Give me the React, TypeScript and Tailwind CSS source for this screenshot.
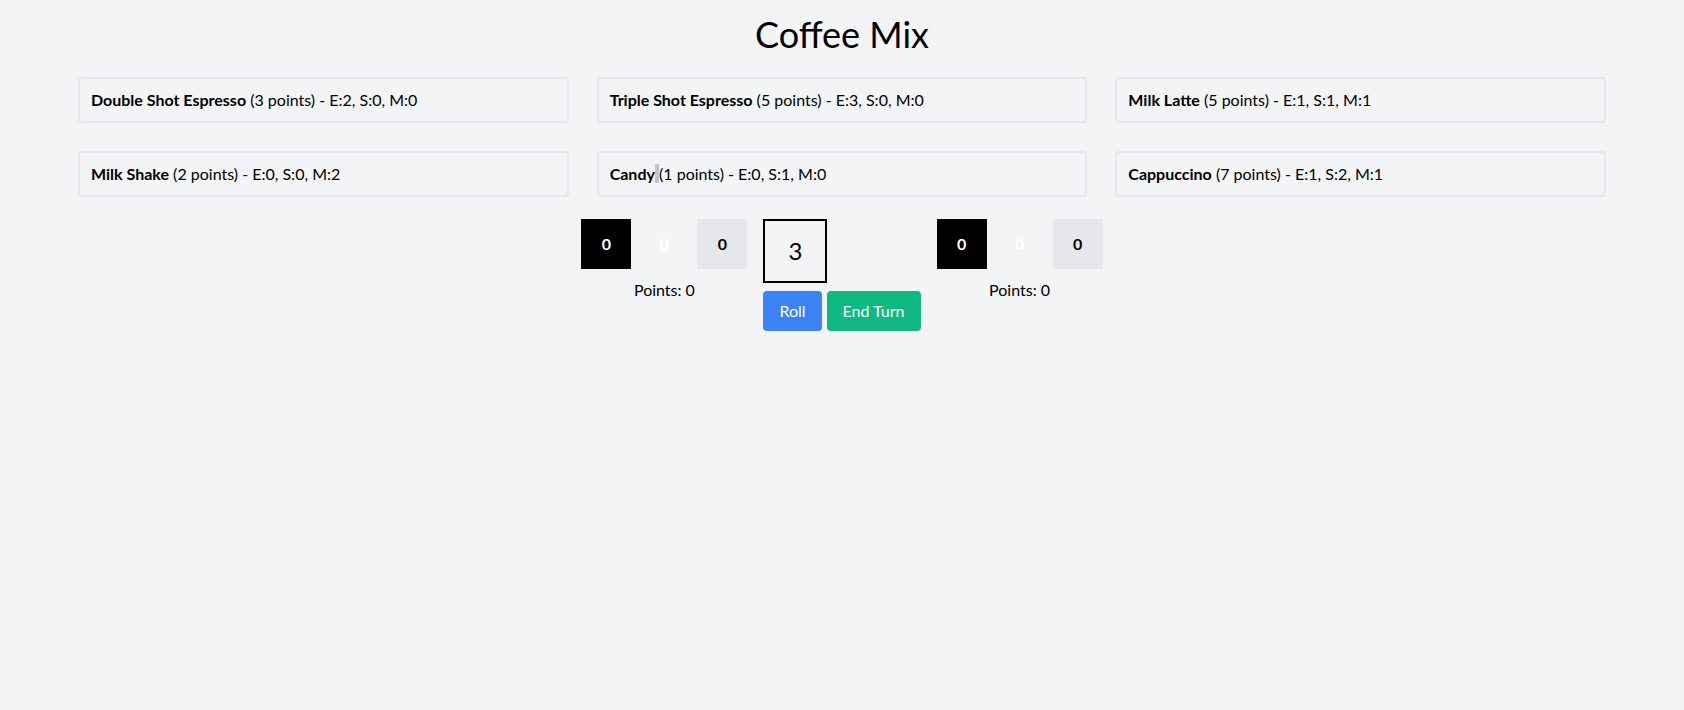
const drinks = [
  { name: "Double Shot Espresso", points: 3, e: 2, s: 0, m: 0 },
  { name: "Triple Shot Espresso", points: 5, e: 3, s: 0, m: 0 },
  { name: "Milk Latte", points: 5, e: 1, s: 1, m: 1 },
  { name: "Milk Shake", points: 2, e: 0, s: 0, m: 2 },
  { name: "Candy", points: 1, e: 0, s: 1, m: 0 },
  { name: "Cappuccino", points: 7, e: 1, s: 2, m: 1 },
];

function Player() {
  return (
    <div className="flex flex-col items-center">
      <div className="flex gap-2">
        <div className="w-[50px] h-[50px] bg-black text-white font-bold flex items-center justify-center">0</div>
        <div className="w-[50px] h-[50px] text-white font-bold flex items-center justify-center">0</div>
        <div className="w-[50px] h-[50px] bg-[#e5e7eb] text-black font-bold flex items-center justify-center">0</div>
      </div>
      <p className="mt-[9px]">Points: 0</p>
    </div>
  );
}

export default function App() {
  return (
    <div className="min-h-screen bg-[#f3f4f6] text-black font-['Segoe_UI','Lato',sans-serif]">
      <h1 className="text-4xl text-center pt-[14px]">Coffee Mix</h1>

      <div className="grid grid-cols-3 gap-7 px-[78px] mt-[23px]">
        {drinks.map((d) => (
          <div key={d.name} className="border-2 border-[#e5e7eb] rounded py-[9px] px-[11px] leading-6">
            <strong>{d.name}</strong>
            {d.name === "Candy" ? <span className="bg-[#c4c4c4]"> </span> : " "}
            ({d.points} points) - E:{d.e}, S:{d.s}, M:{d.m}
          </div>
        ))}
      </div>

      <div className="flex justify-center items-start gap-4 mt-[22px]">
        <Player />
        <div className="flex flex-col items-start">
          <div className="w-16 h-16 border-2 border-black flex items-center justify-center text-2xl">3</div>
          <div className="flex gap-[5px] mt-2">
            <button className="bg-[#3b82f6] text-white px-4 py-2 rounded">Roll</button>
            <button className="bg-[#10b981] text-white px-4 py-2 rounded">End Turn</button>
          </div>
        </div>
        <Player />
      </div>
    </div>
  );
}
